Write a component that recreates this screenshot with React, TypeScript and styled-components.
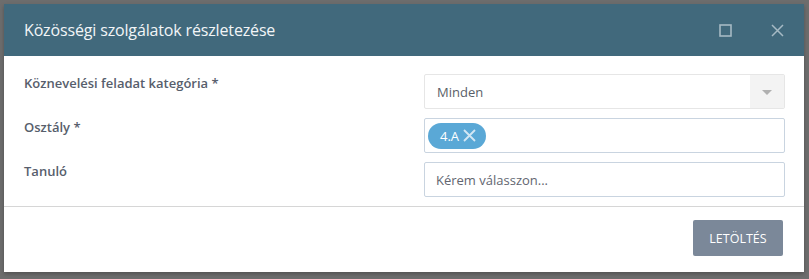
import React from 'react';
import styled, { createGlobalStyle } from 'styled-components';

const GlobalStyle = createGlobalStyle`
  html, body {
    margin: 0;
    padding: 0;
    background: #6d6d6d;
    font-family: 'Open Sans', 'Liberation Sans', sans-serif;
  }
`;

const Backdrop = styled.div`
  width: 809px;
  height: 279px;
  padding: 4px 5px 0 4px;
  box-sizing: border-box;
  background: #6d6d6d;
`;

const Dialog = styled.div`
  width: 800px;
  height: 268px;
  background: #ffffff;
  display: flex;
  flex-direction: column;
  box-shadow: 0 2px 4px rgba(0, 0, 0, 0.25);
`;

const Header = styled.div`
  height: 52px;
  background: #41697c;
  display: flex;
  align-items: center;
  padding: 0 20px 0 20px;
`;

const Title = styled.h1`
  flex: 1;
  margin: 0;
  font-size: 16px;
  font-weight: 400;
  color: #f2f5f7;
  letter-spacing: -0.15px;
`;

const HeaderButton = styled.button`
  border: 0;
  background: none;
  padding: 0;
  margin-left: ${(p: { $gap: number }) => p.$gap}px;
  display: flex;
  align-items: center;
  justify-content: center;
  width: 14px;
  height: 14px;
  cursor: pointer;
`;

const Body = styled.div`
  padding: 18px 19px 9px 20px;
  display: grid;
  grid-template-columns: 400px 361px;
  row-gap: 9px;
  border-bottom: 1px solid #d6d6d6;
`;

const Label = styled.label`
  font-size: 13px;
  font-weight: 600;
  color: #575e6c;
  line-height: 18px;
`;

const Field = styled.div<{ $tone: 'plain' | 'blue' }>`
  height: 35px;
  box-sizing: border-box;
  border: 1px solid ${(p) => (p.$tone === 'plain' ? '#e6e6e6' : '#c9d4e0')};
  border-radius: 2px;
  display: flex;
  align-items: center;
  font-size: 13px;
  color: #5a5f69;
  background: #fff;
`;

const Value = styled.span`
  flex: 1;
  padding-left: 12px;
`;

const ArrowBox = styled.span`
  width: 34px;
  align-self: stretch;
  background: #f3f3f3;
  display: flex;
  align-items: center;
  justify-content: center;
  &::after {
    content: '';
    border-left: 5px solid transparent;
    border-right: 5px solid transparent;
    border-top: 5px solid #b0b0b0;
    margin-top: 1px;
  }
`;

const Chip = styled.span`
  margin-left: 3px;
  height: 26px;
  border-radius: 13px;
  background: #5aa8d6;
  color: #ffffff;
  font-size: 13px;
  display: flex;
  align-items: center;
  padding: 0 10px 0 12px;
  gap: 4px;
`;

const Placeholder = styled.span`
  padding-left: 11px;
  color: #626670;
`;

const Footer = styled.div`
  flex: 1;
  display: flex;
  justify-content: flex-end;
  align-items: flex-start;
  padding: 13px 21px 0 0;
`;

const DownloadButton = styled.button`
  width: 90px;
  height: 36px;
  border: 0;
  border-radius: 2px;
  background: #7b8899;
  color: #ffffff;
  font-family: 'Open Sans', 'Liberation Sans', sans-serif;
  font-size: 12.5px;
  font-weight: 400;
  cursor: pointer;
`;

const App: React.FC = () => {
  return (
    <Backdrop>
      <GlobalStyle />
      <Dialog>
        <Header>
          <Title>Közösségi szolgálatok részletezése</Title>
          <HeaderButton $gap={0} aria-label="maximize">
            <svg width="13" height="13" viewBox="0 0 13 13">
              <rect x="1" y="1" width="11" height="11" fill="none" stroke="#a6bac4" strokeWidth="1.6" />
            </svg>
          </HeaderButton>
          <HeaderButton $gap={38} aria-label="close">
            <svg width="13" height="13" viewBox="0 0 13 13">
              <path d="M1 1 L12 12 M12 1 L1 12" stroke="#a6bac4" strokeWidth="1.5" />
            </svg>
          </HeaderButton>
        </Header>
        <Body>
          <Label>Köznevelési feladat kategória *</Label>
          <Field $tone="plain">
            <Value>Minden</Value>
            <ArrowBox />
          </Field>
          <Label>Osztály *</Label>
          <Field $tone="blue">
            <Chip>
              4.A
              <svg width="13" height="13" viewBox="0 0 13 13">
                <path d="M1 1 L12 12 M12 1 L1 12" stroke="#d3e7f4" strokeWidth="1.8" />
              </svg>
            </Chip>
          </Field>
          <Label>Tanuló</Label>
          <Field $tone="blue">
            <Placeholder>Kérem válasszon...</Placeholder>
          </Field>
        </Body>
        <Footer>
          <DownloadButton>LETÖLTÉS</DownloadButton>
        </Footer>
      </Dialog>
    </Backdrop>
  );
};

export default App;
